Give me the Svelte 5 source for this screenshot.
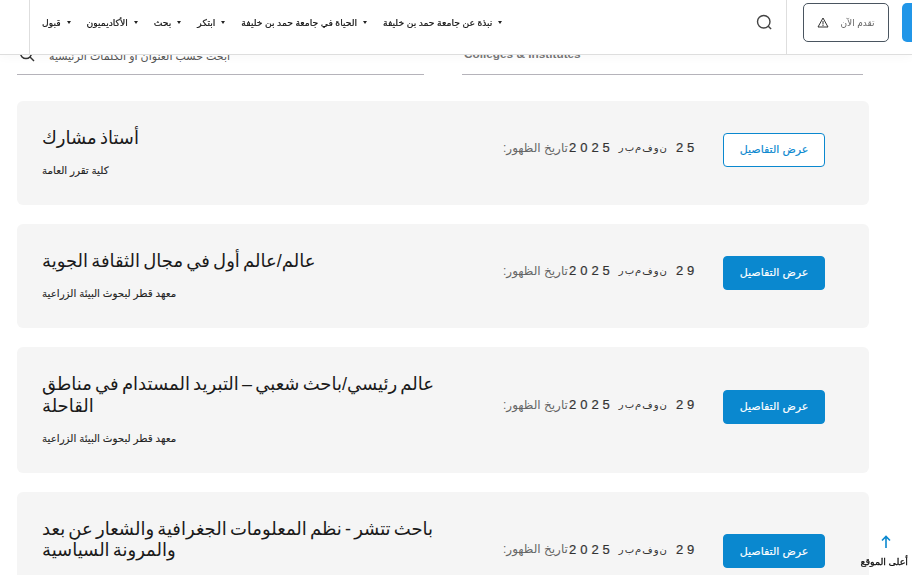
<script>
  const nav = [
    "قبول",
    "الأكاديميون",
    "بحث",
    "ابتكر",
    "الحياة في جامعة حمد بن خليفة",
    "نبذة عن جامعة حمد بن خليفة",
  ];

  const jobs = [
    { title: "أستاذ مشارك", dept: "كلية تقرر العامة", date: "25 نوفمبر 2025", outline: true },
    { title: "عالم/عالم أول في مجال الثقافة الجوية", dept: "معهد قطر لبحوث البيئة الزراعية", date: "29 نوفمبر 2025" },
    { title: "عالم رئيسي/باحث شعبي – التبريد المستدام في مناطق القاحلة", dept: "معهد قطر لبحوث البيئة الزراعية", date: "29 نوفمبر 2025" },
    { title: "باحث تتشر - نظم المعلومات الجغرافية والشعار عن بعد والمرونة السياسية", dept: "معهد قطر لبحوث البيئة الزراعية", date: "29 نوفمبر 2025" },
  ];

  // the date is spaced out letter by letter, so each word gets its own row of glyphs
  const isNum = (word) => /\d/.test(word);
</script>

<header class="topbar">
  <div class="logo-slot"></div>
  <nav class="menu">
    {#each nav as item}
      <span class="menu-item">{item}<i class="caret"></i></span>
    {/each}
  </nav>
  <div class="search-slot">
    <svg width="17" height="17" viewBox="0 0 18 18" fill="none" stroke="#444" stroke-width="1.5">
      <circle cx="8.2" cy="8.2" r="6.6" />
      <path d="M13 13l3 3" />
    </svg>
  </div>
  <div class="actions">
    <button class="apply">
      <svg width="12" height="11" viewBox="0 0 12 11" fill="none" stroke="#333" stroke-width="1">
        <path d="M6 1l5 9H1z" />
        <path d="M6 4v3.5M6 8v1" />
      </svg>
      <span>تقدم الآن</span>
    </button>
    <div class="blue-btn"></div>
  </div>
</header>

<main class="page">
  <section class="filters">
    <div class="field">
      <svg width="16" height="16" viewBox="0 0 16 16" fill="none" stroke="#333" stroke-width="1.5">
        <circle cx="7" cy="7" r="5.6" />
        <path d="M11 11l4 4" />
      </svg>
      <span class="placeholder">ابحث حسب العنوان أو الكلمات الرئيسية</span>
    </div>
    <div class="field second">
      <span class="latin">Colleges &amp; Institutes</span>
      <svg class="chevron" width="8" height="5" viewBox="0 0 8 5" fill="none" stroke="#666" stroke-width="1">
        <path d="M1 1l3 3 3-3" />
      </svg>
    </div>
  </section>

  <section class="list">
    {#each jobs as job}
      <article class="card">
        <div class="info">
          <h3>{job.title}</h3>
          <p>{job.dept}</p>
        </div>
        <div class="date">
          <span class="label" dir="rtl">تاريخ الظهور:</span>
          <span class="value" dir="rtl">
            {#each job.date.split(" ") as word}
              <span class="word" class:num={isNum(word)} dir={isNum(word) ? "ltr" : "rtl"}>
                {#each [...word] as ch}<span>{ch}</span>{/each}
              </span>
            {/each}
          </span>
        </div>
        <button class="details" class:outline={job.outline}>عرض التفاصيل</button>
      </article>
    {/each}
  </section>
</main>

<div class="to-top">
  <svg width="12" height="14" viewBox="0 0 12 14" fill="none" stroke="#0a88cf" stroke-width="1.6">
    <path d="M6 13V2M2 5.5L6 1.5l4 4" />
  </svg>
  <span>أعلى الموقع</span>
</div>

<style>
  :global(body) {
    background: #fff;
    font-family: "Liberation Sans", "Noto Sans", "DejaVu Sans", sans-serif;
    overflow: hidden;
    height: 575px;
  }

  button {
    font-family: inherit;
    cursor: pointer;
  }

  .topbar {
    position: fixed;
    top: 0;
    left: 0;
    right: 0;
    height: 54px;
    background: #fff;
    border-bottom: 1px solid #dedede;
    box-shadow: 0 2px 10px rgba(0, 0, 0, 0.03);
    display: flex;
    z-index: 5;
  }

  .logo-slot {
    width: 29px;
    border-right: 1px solid #dedede;
  }

  .menu {
    display: flex;
    align-items: center;
    gap: 16px;
    padding-left: 12px;
    flex: 1;
  }

  .menu-item {
    font-size: 9.2px;
    color: #111;
    -webkit-text-stroke: 0.2px #111;
    display: flex;
    align-items: center;
    gap: 3px;
    white-space: nowrap;
    margin-top: -9px;
  }

  .caret {
    width: 0;
    height: 0;
    border-left: 2.5px solid transparent;
    border-right: 2.5px solid transparent;
    border-top: 3px solid #222;
    margin-left: 3px;
  }

  .search-slot {
    width: 44px;
    border-right: 1px solid #dedede;
    display: flex;
    align-items: center;
    justify-content: flex-end;
    padding: 0 13px 10px 0;
    box-sizing: border-box;
  }

  .actions {
    display: flex;
    align-items: flex-start;
    padding: 3px 0 0 16px;
    gap: 13px;
    width: 109px;
    box-sizing: content-box;
    overflow: hidden;
  }

  .apply {
    flex: none;
    width: 86px;
    height: 39px;
    background: #fff;
    border: 1px solid #4a5560;
    border-radius: 5px;
    display: flex;
    align-items: center;
    justify-content: center;
    gap: 11px;
    font-size: 9px;
    color: #666;
    padding: 0;
  }

  .blue-btn {
    flex: none;
    width: 40px;
    height: 39px;
    background: #2196e8;
    border-radius: 5px;
  }

  .page {
    padding: 34px 43px 0 17px;
    height: 541px;
    overflow: hidden;
  }

  .filters {
    display: grid;
    grid-template-columns: 407px 401px;
    gap: 38px;
  }

  .field {
    height: 41px;
    border-bottom: 1px solid #b5b3ba;
    display: flex;
    align-items: center;
    gap: 14px;
    padding: 0 0 0 2px;
    box-sizing: border-box;
  }

  .placeholder {
    font-size: 11px;
    color: #555;
    margin-top: 4px;
  }

  .latin {
    font-size: 11.8px;
    font-weight: 700;
    color: #777;
  }

  .chevron {
    margin-left: auto;
    margin-bottom: 3px;
  }

  .list {
    margin-top: 26px;
    display: flex;
    flex-direction: column;
    gap: 19px;
  }

  .card {
    background: #f5f5f5;
    border-radius: 6px;
    display: flex;
    align-items: center;
    padding: 27px 44px 26px 25px;
  }

  .info {
    width: 436px;
    flex: none;
    margin-right: 25px;
  }

  h3 {
    margin: 0 0 13.4px;
    font-size: 18px;
    font-weight: 400;
    line-height: 21.6px;
    word-spacing: -1.8px;
    color: #1a1a1a;
  }

  .info p {
    margin: 0;
    font-size: 10.3px;
    line-height: 16px;
    color: #222;
    -webkit-text-stroke: 0.1px #222;
  }

  .date {
    width: 220px;
    flex: none;
    font-size: 12px;
    color: #666;
    display: flex;
    align-items: center;
    margin-bottom: 8px;
    margin-top: -3px;
  }

  .label {
    margin-right: 1px;
  }

  .value {
    display: flex;
    align-items: center;
    gap: 9px;
    color: #333;
    font-size: 10px;
  }

  .word {
    display: flex;
    align-items: center;
    gap: 1px;
  }

  .word.num {
    gap: 4px;
    font-size: 13px;
    -webkit-text-stroke: 0.2px #333;
  }

  .details {
    flex: none;
    width: 102px;
    height: 34px;
    margin-bottom: 4px;
    margin-top: -3px;
    background: #0a88cf;
    color: #fff;
    border: 1px solid #0a88cf;
    border-radius: 4px;
    font-size: 11px;
    -webkit-text-stroke: 0.15px currentColor;
    padding: 0;
  }

  .details.outline {
    background: #fff;
    color: #0a88cf;
  }

  .to-top {
    position: fixed;
    right: 4px;
    bottom: 8px;
    display: flex;
    flex-direction: column;
    align-items: center;
    gap: 7px;
    font-size: 9.5px;
    -webkit-text-stroke: 0.3px #111;
    color: #111;
    z-index: 4;
  }

  .to-top svg {
    margin-left: 4px;
  }
</style>
